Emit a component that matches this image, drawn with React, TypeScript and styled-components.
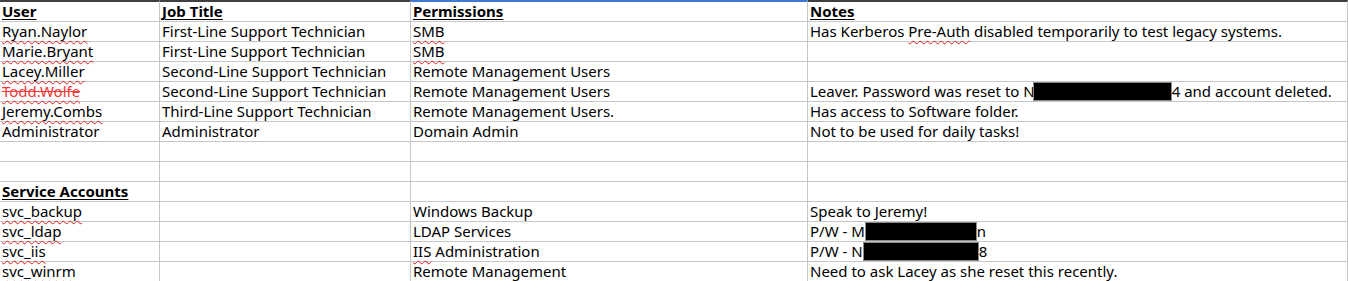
import styled, { createGlobalStyle } from "styled-components";

const GlobalStyle = createGlobalStyle`
  html, body {
    margin: 0;
    padding: 0;
    background: #ffffff;
  }
  body {
    font-family: "Noto Sans", "Open Sans", sans-serif;
    color: #000000;
    overflow: hidden;
  }
`;

const Sheet = styled.div`
  display: grid;
  grid-template-columns: 160px 251px 397px 1fr;
  width: 1348px;
`;

const Cell = styled.div<{ $head?: boolean; $topColor?: string }>`
  box-sizing: border-box;
  height: ${(p) => (p.$head ? "22px" : "20px")};
  border-right: 1px solid #c6c6c6;
  border-bottom: 1px solid #c6c6c6;
  border-top: ${(p) => (p.$head ? `2px solid ${p.$topColor || "#3f3f3f"}` : "none")};
  padding: 0 0 0 2px;
  display: flex;
  align-items: flex-end;
  font-size: 15px;
  line-height: 19px;
  white-space: nowrap;
  overflow: visible;
`;

const Content = styled.span`
  display: block;
`;

const Header = styled.span`
  font-weight: bold;
  text-decoration: underline;
  text-decoration-thickness: 1px;
  text-underline-offset: 2px;
`;

const Misspelt = styled.span`
  text-decoration: underline wavy #e02020;
  text-decoration-thickness: 1px;
  text-underline-offset: 3px;
  text-decoration-skip-ink: none;
`;

const Struck = styled.span`
  color: #f23a3a;
  text-decoration: line-through #f23a3a;
  text-decoration-thickness: 1px;
`;

const Redacted = styled.span<{ $w: number }>`
  display: inline-block;
  box-sizing: border-box;
  width: ${(p) => p.$w}px;
  height: 19px;
  background: #000000;
  border: 1px solid #8a8a8a;
  vertical-align: -4px;
`;

type Row = React.ReactNode[];

const rows: Row[] = [
  [<Misspelt>Ryan.Naylor</Misspelt>, "First-Line Support Technician", <Misspelt>SMB</Misspelt>,
    <>Has Kerberos <Misspelt>Pre-Auth</Misspelt> disabled temporarily to test legacy systems.</>],
  [<Misspelt>Marie.Bryant</Misspelt>, "First-Line Support Technician", <Misspelt>SMB</Misspelt>, ""],
  [<Misspelt>Lacey.Miller</Misspelt>, "Second-Line Support Technician", "Remote Management Users", ""],
  [<Struck><Misspelt>Todd.Wolfe</Misspelt></Struck>, "Second-Line Support Technician", "Remote Management Users",
    <>Leaver. Password was reset to N<Redacted $w={139} style={{ marginLeft: -2 }} />4 and account deleted.</>],
  [<Misspelt>Jeremy.Combs</Misspelt>, "Third-Line Support Technician", "Remote Management Users.", "Has access to Software folder."],
  ["Administrator", "Administrator", "Domain Admin", "Not to be used for daily tasks!"],
  ["", "", "", ""],
  ["", "", "", ""],
  [<Header>Service Accounts</Header>, "", "", ""],
  [<Misspelt>svc_backup</Misspelt>, "", "Windows Backup", "Speak to Jeremy!"],
  [<Misspelt>svc_ldap</Misspelt>, "", "LDAP Services", <>P/W - M<Redacted $w={112} />n</>],
  [<Misspelt>svc_iis</Misspelt>, "", <><Misspelt>IIS</Misspelt> Administration</>, <>P/W - N<Redacted $w={116} />8</>],
  [<Misspelt>svc_winrm</Misspelt>, "", "Remote Management", "Need to ask Lacey as she reset this recently."],
];

const headers = ["User", "Job Title", "Permissions", "Notes"];

export default function App() {
  return (
    <>
      <GlobalStyle />
      <Sheet>
        {headers.map((h, i) => (
          <Cell key={h} $head $topColor={i === 2 ? "#3d7ad6" : undefined}>
            <Content>
              <Header>{h}</Header>
            </Content>
          </Cell>
        ))}
        {rows.map((row, r) =>
          row.map((c, i) => (
            <Cell key={`${r}-${i}`}>
              <Content>{c}</Content>
            </Cell>
          ))
        )}
      </Sheet>
    </>
  );
}
